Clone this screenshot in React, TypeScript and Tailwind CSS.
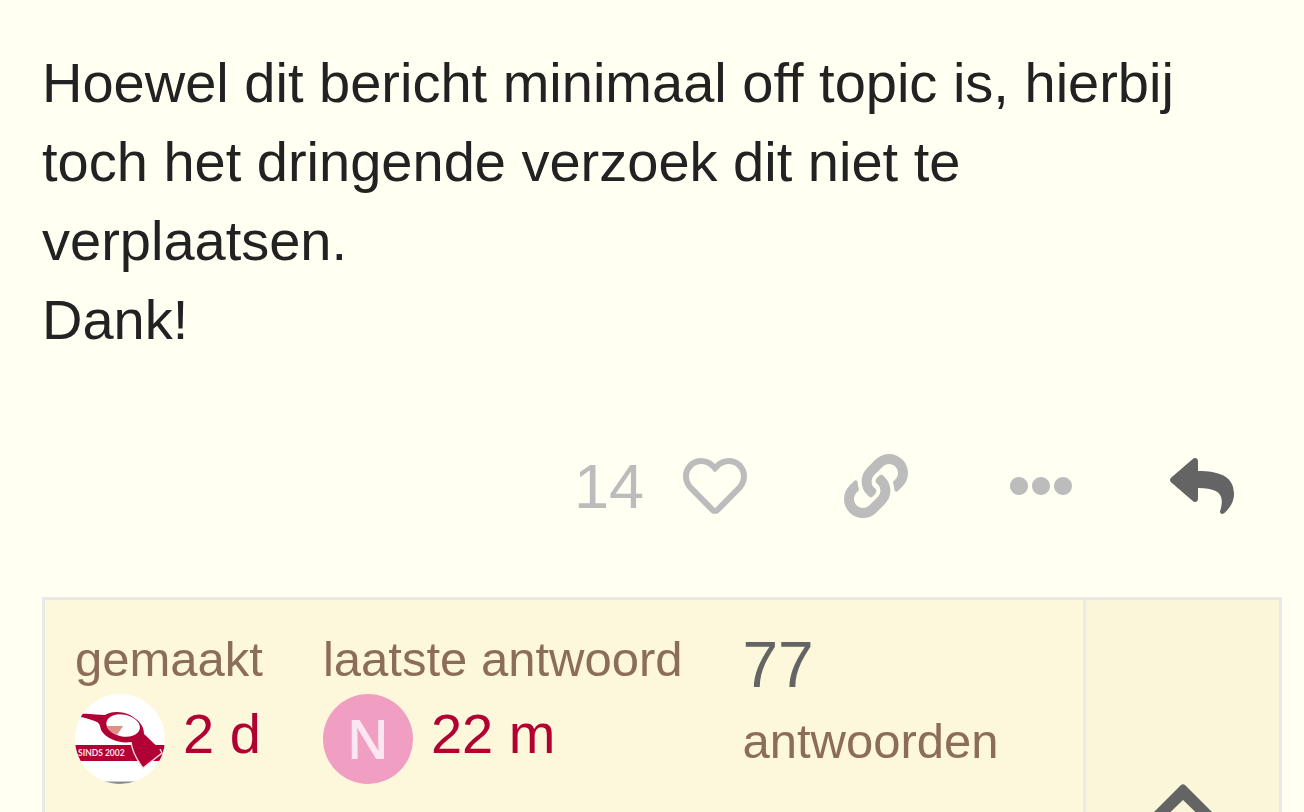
import { ReactNode } from 'react'
import { FaEllipsisH, FaLink, FaRegHeart, FaReply } from 'react-icons/fa'

interface ActionProps {
  label: string
  color?: string
  children: ReactNode
}

function ActionButton({ label, color = 'text-[#bcbcbc]', children }: ActionProps) {
  return (
    <button type="button" aria-label={label} className={`text-[64px] ${color}`}>
      {children}
    </button>
  )
}

function ForumAvatar() {
  return (
    <svg viewBox="0 0 90 90" className="w-[90px] h-[90px] rounded-full shrink-0" role="img" aria-label="avatar">
      <rect width="90" height="90" fill="#ffffff" />
      <rect y="51" width="90" height="16" fill="#b00034" />
      <text x="3" y="62" fontSize="8.5" fontWeight="700" fontFamily="Lato, sans-serif" fill="#f8e4ea">SINDS 2002</text>
      {/* bird: beak, head ring, neck */}
      <path d="M6 20 C14 19 22 21 30 21 C36 17 47 17 55 21 C64 26 69 32 69 40 L88 58 L68 74 C62 66 57 57 56 48 C45 50 31 45 26 36 C25 32 25 30 22 28 C17 26 12 24 6 23 Z" fill="#b00034" />
      <path d="M56 48 C57 56 62 66 68 74 L87 59 L85 55" fill="none" stroke="#f4dce3" strokeWidth="1.4" />
      <ellipse cx="48" cy="31.5" rx="17" ry="11" transform="rotate(12 48 32)" fill="#ffffff" />
      <path d="M32 32 H48 L42 41 C38 40 33 36 32 32 Z" fill="#df8d85" />
      <rect y="87.5" width="90" height="3" fill="#8d8b93" />
    </svg>
  )
}

function LetterAvatar({ letter }: { letter: string }) {
  return (
    <span className="w-[90px] h-[90px] rounded-full shrink-0 flex justify-center bg-[#f09ec1] text-[#fce6f1] text-[54px] leading-[88px] font-semibold font-['Open_Sans',sans-serif]">
      {letter}
    </span>
  )
}

function TopicStat({ label, time, avatar }: { label: string, time: string, avatar: ReactNode }) {
  return (
    <li>
      <div className="text-[49px] leading-[70px] text-[#8c6d5a]">{label}</div>
      <a href="#last" className="flex items-start gap-[18px] text-[56px] leading-[80px] text-[#b20032]">
        {avatar}
        <span>{time}</span>
      </a>
    </li>
  )
}

export default function App() {
  return (
    <div className="h-screen overflow-hidden bg-[#fffff2] pl-[42px] pr-[22px] font-['Liberation_Sans',Arial,sans-serif]">
      <article className="pt-[43px]">
        <p className="text-[56px] leading-[79px] text-[#222222] pr-16">
          Hoewel dit bericht minimaal off topic is, hierbij toch het dringende verzoek dit niet te verplaatsen.
          <br />
          Dank!
        </p>

        <div className="flex items-center justify-end gap-[101px] pt-[83px] pr-12">
          <div className="flex items-center gap-[97px]">
            <div className="flex items-center gap-[39px]">
              <span className="text-[63px] leading-[88px] text-[#bcbcbc]">14</span>
              <ActionButton label="Vind ik leuk"><FaRegHeart /></ActionButton>
            </div>
            <ActionButton label="Link kopiëren"><FaLink /></ActionButton>
          </div>
          <div className="flex items-center gap-[97px]">
            <ActionButton label="Meer"><FaEllipsisH /></ActionButton>
            <ActionButton label="Antwoorden" color="text-[#646464]"><FaReply /></ActionButton>
          </div>
        </div>
      </article>

      <section className="mt-[67px] flex border-[3px] border-[#e9e9e9] bg-[#fdf8dc]">
        <ul className="flex flex-1 gap-[60px] pl-[30px] pt-6 pb-16 whitespace-nowrap">
          <TopicStat label="gemaakt" time="2 d" avatar={<ForumAvatar />} />
          <TopicStat label="laatste antwoord" time="22 m" avatar={<LetterAvatar letter="N" />} />
          <li>
            <div className="text-[64px] leading-[82px] text-[#646464]">77</div>
            <div className="text-[49px] leading-[70px] text-[#8c6d5a]">antwoorden</div>
          </li>
        </ul>
        <button type="button" aria-label="Details tonen" className="w-[196px] shrink-0 flex justify-center border-l-[3px] border-[#e9e9e9] bg-[#f9f6da] pt-[184px] pb-6">
          <svg viewBox="0 0 80 48" className="w-20 h-12" fill="#646464">
            <path d="M38 1 Q40 -0.500 42 1 L77 36 Q79 38 77 40 L73 44 Q71 46 69 44 L40 16 L11 44 Q9 46 7 44 L3 40 Q1 38 3 36 Z" />
          </svg>
        </button>
      </section>
    </div>
  )
}
